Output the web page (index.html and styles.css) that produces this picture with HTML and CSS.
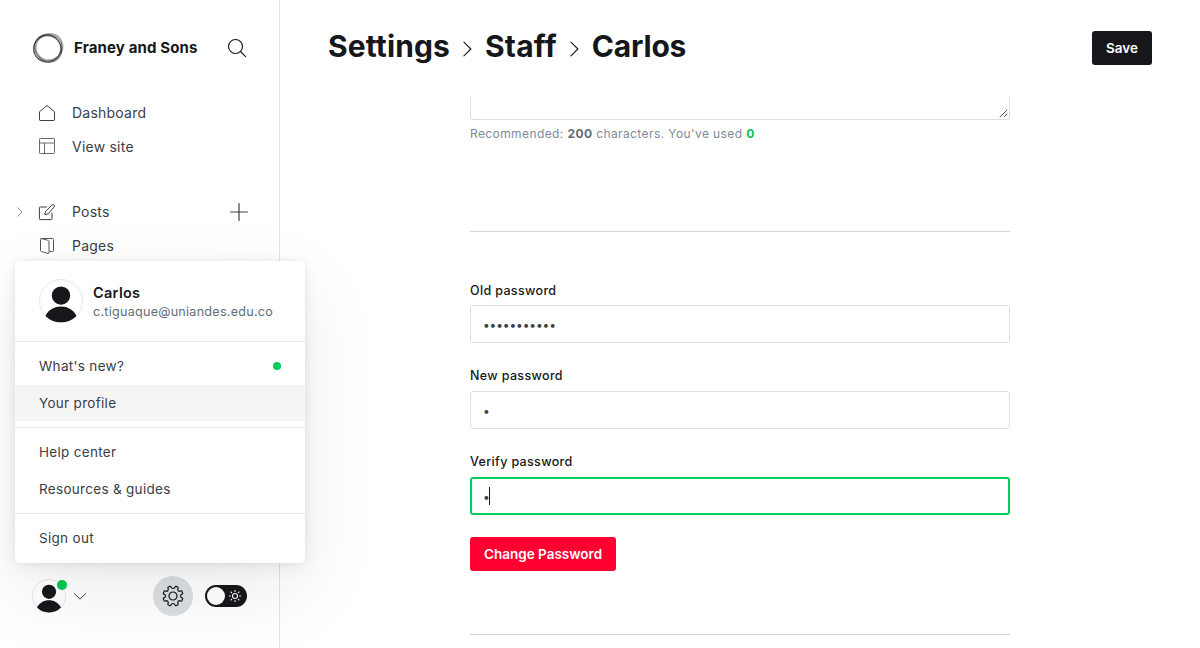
FILE: index.html
```html
<!DOCTYPE html>
<html lang="en">
<head>
<meta charset="utf-8">
<title>Settings - Staff - Carlos</title>
<link rel="stylesheet" href="styles.css">
</head>
<body>
<div class="app">
  <nav class="sidebar">
    <header class="brand">
      <svg class="brand-logo" viewBox="0 0 32 32" fill="none" stroke="#15171a">
        <ellipse cx="15.300" cy="16.800" rx="13.500" ry="13.300" stroke-width="1.300" opacity=".65"/>
        <ellipse cx="17.200" cy="15.200" rx="13.600" ry="13" stroke-width="1.900" opacity=".35" transform="rotate(-35 17 15.300)"/>
        <ellipse cx="16.200" cy="16.200" rx="14.600" ry="12.700" stroke-width="1" opacity=".5" transform="rotate(50 16.200 16.200)"/>
        <ellipse cx="15.700" cy="16" rx="14.600" ry="13" stroke-width=".8" opacity=".45" transform="rotate(-20 15.700 16)"/>
      </svg>
      <span class="brand-name">Franey and Sons</span>
      <svg class="search" viewBox="0 0 18 18" fill="none" stroke="#15171a" stroke-width="1.15" stroke-linecap="round"><circle cx="7.5" cy="7.5" r="7"/><path d="M12.5 12.5 17.6 17.6"/></svg>
    </header>
    <ul class="nav">
      <li class="nav-item">
        <svg class="nav-icon" viewBox="0 0 16 16" fill="none" stroke="#394047" stroke-linejoin="round"><path d="M.5 6.7 8 .6l7.500 6.100v8.100a.7.7 0 0 1-.7.7H1.200a.7.7 0 0 1-.7-.7z"/></svg>
        <span>Dashboard</span>
      </li>
      <li class="nav-item">
        <svg class="nav-icon nav-icon-site" viewBox="0 0 16 16" fill="none" stroke="#626d79"><rect x=".5" y=".5" width="15" height="15" rx=".8"/><path d="M.5 5h15M5.500 5v10.500"/></svg>
        <span>View site</span>
      </li>
    </ul>
    <ul class="nav nav-content">
      <li class="nav-item">
        <svg class="nav-expand" viewBox="0 0 6 10" fill="none" stroke="#7c8b9a" stroke-linecap="round" stroke-linejoin="round"><path d="M.9.8 5.100 5 .9 9.200"/></svg>
        <svg class="nav-icon" viewBox="0 0 16 16" fill="none" stroke="#394047" stroke-linecap="round" stroke-linejoin="round"><path d="M7.500 3H1.200a.8.8 0 0 0-.8.8v11a.8.8 0 0 0 .8.8h11a.8.8 0 0 0 .8-.8V9M8.800 9.900l-3 .7.700-3L13.100 1a1.350 1.350 0 0 1 2 0 1.350 1.350 0 0 1 0 2z"/></svg>
        <span>Posts</span>
        <svg class="nav-plus" viewBox="0 0 18 18" fill="none" stroke="#394047" stroke-width="1.2" stroke-linecap="round"><path d="M9 .6v16.800M.6 9h16.800"/></svg>
      </li>
      <li class="nav-item">
        <svg class="nav-icon" viewBox="0 0 16 16" fill="none" stroke="#4d555d" stroke-linejoin="round"><path d="M2.200.5h11.500a.8.800 0 0 1 .8.800v11.500a.8.800 0 0 1-.8.800h-3.200M2.200.5l6.300 1.700q1.500.4 1.500 1.500v11q0 1-1 .7L2.300 13.500q-.8-.2-.8-1V1.200q0-.7.7-.7z"/></svg>
        <span>Pages</span>
      </li>
    </ul>
    <footer class="account">
      <span class="avatar avatar-small">
        <svg viewBox="0 0 44 44"><circle cx="22" cy="16.600" r="9.200" fill="#15171a"/><path d="M6.500 36.900C9.500 31 15 27.600 22 27.600s12.500 3.400 15.500 9.300A21.700 21.700 0 0 1 22 43.200 21.700 21.700 0 0 1 6.500 36.900z" fill="#15171a"/></svg>
        <i class="badge"></i>
      </span>
      <svg class="account-arrow" viewBox="0 0 12 7" fill="none" stroke="#394047" stroke-linecap="round" stroke-linejoin="round"><path d="M.6.7 6 6.200 11.400.7"/></svg>
      <span class="gear">
        <svg viewBox="-10 -10 20 20" fill="none" stroke="#15171a" stroke-width="1.200" stroke-linecap="round" stroke-linejoin="round">
          <circle r="4"/>
          <path id="tooth" d="M0-7.500C1.200-7.500 1.700-8.200 1.900-8.900Q2.200-9.900 3.100-9.600L4.600-8.980Q5.450-8.550 4.950-7.640C4.600-7 4.460-6.160 5.300-5.300"/>
          <use href="#tooth" transform="rotate(45)"/><use href="#tooth" transform="rotate(90)"/><use href="#tooth" transform="rotate(135)"/><use href="#tooth" transform="rotate(180)"/><use href="#tooth" transform="rotate(225)"/><use href="#tooth" transform="rotate(270)"/><use href="#tooth" transform="rotate(315)"/>
        </svg>
      </span>
      <span class="toggle">
        <i class="toggle-knob"></i>
        <svg viewBox="0 0 14 14" fill="none" stroke="#fff" stroke-width="1.1" stroke-linecap="round"><circle cx="7" cy="7" r="2.500"/><path d="M7 1.400v1M7 11.600v1M1.400 7h1M11.600 7h1M3 3l.7.7M10.300 10.300l.7.7M3 11l.7-.7M10.300 3.700l.7-.7"/></svg>
      </span>
    </footer>
    <div class="menu">
      <div class="menu-user">
        <span class="avatar">
          <svg viewBox="0 0 44 44"><circle cx="22" cy="16.600" r="9.200" fill="#15171a"/><path d="M6.500 36.900C9.500 31 15 27.600 22 27.600s12.500 3.400 15.500 9.300A21.700 21.700 0 0 1 22 43.200 21.700 21.700 0 0 1 6.500 36.900z" fill="#15171a"/></svg>
        </span>
        <div class="menu-identity">
          <div class="menu-name">Carlos</div>
          <div class="menu-email">c.tiguaque@uniandes.edu.co</div>
        </div>
      </div>
      <ul class="menu-group">
        <li class="menu-item"><span>What's new?</span><i class="new-dot"></i></li>
        <li class="menu-item active"><span>Your profile</span></li>
      </ul>
      <ul class="menu-group">
        <li class="menu-item"><span>Help center</span></li>
        <li class="menu-item"><span>Resources &amp; guides</span></li>
      </ul>
      <ul class="menu-group">
        <li class="menu-item"><span>Sign out</span></li>
      </ul>
    </div>
  </nav>
  <main class="main">
    <header class="top">
      <h1 class="crumbs">
        <span class="crumb-settings">Settings</span>
        <svg viewBox="0 0 9 16" fill="none" stroke="#15171a" stroke-width="1.100" stroke-linecap="round" stroke-linejoin="round"><path d="M.9 1.200 7.900 8 .9 14.800"/></svg>
        <span class="crumb-staff">Staff</span>
        <svg viewBox="0 0 9 16" fill="none" stroke="#15171a" stroke-width="1.100" stroke-linecap="round" stroke-linejoin="round"><path d="M.9 1.200 7.900 8 .9 14.800"/></svg>
        <span class="crumb-name">Carlos</span>
      </h1>
      <button class="btn save"><span>Save</span></button>
    </header>
    <section class="form">
      <div class="bio"><svg viewBox="0 0 9 9" stroke="#394047" stroke-width=".9"><path d="M.8 8.200 8.200.8M4.800 8.200 8.200 4.800"/></svg></div>
      <p class="hint"><span>Recommended: <b>200</b> characters. You've used <b class="count">0</b></span></p>
      <hr class="rule">
      <label class="label label-old"><span>Old password</span></label>
      <div class="input"><span class="dots">•••••••••••</span></div>
      <label class="label"><span>New password</span></label>
      <div class="input"><span class="dots">•</span></div>
      <label class="label"><span>Verify password</span></label>
      <div class="input focused"><span class="dots">•</span><i class="caret"></i></div>
      <button class="btn change"><span>Change Password</span></button>
      <hr class="rule rule-end">
    </section>
  </main>
</div>
</body>
</html>
```
FILE: styles.css
```css
* { box-sizing: border-box; }
body { margin: 0; font-family: Inter, sans-serif; color: #15171a; background: #fff; }
ul { list-style: none; margin: 0; padding: 0; }
svg { display: block; flex: none; overflow: visible; }
.app { display: flex; height: 648px; overflow: hidden; }

.sidebar { position: relative; z-index: 2; width: 280px; flex: none; display: flex; flex-direction: column; border-right: 1px solid #e1e4e7; }
.brand { display: flex; align-items: center; height: 96px; padding: 0 33px 0 32px; }
.brand-logo { width: 32px; height: 32px; }
.brand-name { margin-left: 10px; font-size: 15px; font-weight: 700; line-height: 20px; letter-spacing: .14px; white-space: nowrap; }
.search { width: 18px; height: 18px; margin-left: auto; }
.nav-item { display: flex; align-items: center; height: 34px; padding-left: 39px; font-size: 14px; letter-spacing: .23px; color: #394047; }
.nav-item span { padding-bottom: 2px; }
.nav-icon { width: 16px; height: 16px; margin-right: 17px; }
.nav-icon-site { margin-top: -2px; }
.nav-content { margin-top: 31px; }
.nav-expand { width: 6px; height: 10px; margin: 0 16px 0 -22px; }
.nav-plus { width: 18px; height: 18px; margin-left: auto; margin-right: 31px; }

.account { display: flex; align-items: center; height: 40px; margin: auto 32px 32px 32px; }
.avatar { position: relative; width: 44px; height: 44px; border: 1px solid #e5e8eb; border-radius: 50%; background: #fff; flex: none; }
.avatar svg { width: 44px; height: 44px; margin: -1px; }
.avatar-small { width: 34px; height: 34px; }
.avatar-small svg { width: 34px; height: 34px; }
.badge { position: absolute; top: 0; right: -2px; width: 10px; height: 10px; border-radius: 50%; background: #00c853; }
.account-arrow { width: 12px; height: 7px; margin-left: 8px; }
.gear { display: flex; align-items: center; justify-content: center; width: 40px; height: 40px; margin-left: auto; border-radius: 50%; background: #dbdfe2; }
.gear svg { width: 20px; height: 20px; }
.toggle { display: flex; align-items: center; justify-content: space-between; width: 42px; height: 22px; margin-left: 12px; padding: 0 5px 0 2px; border-radius: 11px; background: #15171a; }
.toggle-knob { width: 18px; height: 18px; border-radius: 50%; background: #fff; }
.toggle svg { width: 14px; height: 14px; }

.menu { position: absolute; left: 15px; top: 261px; width: 290px; height: 302px; border-radius: 4px; background: #fff; box-shadow: 0 0 7px rgba(0,0,0,.07), 0 5px 18px rgba(0,0,0,.05), 0 28px 80px rgba(0,0,0,.08); }
.menu-user { display: flex; align-items: center; height: 80px; padding: 0 24px; }
.menu-identity { margin-left: 10px; padding-top: 1px; }
.menu-name { font-size: 14.5px; line-height: 20px; font-weight: 600; letter-spacing: .3px; }
.menu-email { font-size: 12.6px; line-height: 17px; color: #626d79; letter-spacing: .25px; }
.menu-group { height: 86px; padding-top: 6px; border-top: 1px solid #e9ebed; }
.menu-item { display: flex; align-items: center; justify-content: space-between; height: 36px; margin-bottom: 1px; padding: 0 24px; font-size: 13.5px; letter-spacing: .3px; color: #394047; }
.menu-item span { padding-bottom: 1px; }
.active { background: #f4f6f6; }
.new-dot { width: 8px; height: 8px; border-radius: 50%; background: #00cf5b; }

.main { flex: 1; display: flex; flex-direction: column; padding: 0 48px; }
.top { display: flex; align-items: center; justify-content: space-between; height: 96px; flex: none; }
.crumbs { display: flex; align-items: center; margin: 0; font-size: 30px; line-height: 38px; font-weight: 700; padding-bottom: 4px; }
.crumbs svg { width: 9px; height: 16px; margin: 5px 13px 0 13px; }
.crumb-settings { letter-spacing: .12px; }
.crumb-staff { letter-spacing: .2px; }
.crumb-name { letter-spacing: -.2px; }
.btn { height: 34px; padding: 0 14px 1px; border: 0; border-radius: 3px; color: #fff; font: 600 13.5px Inter, sans-serif; white-space: nowrap; }
.save { width: 60px; background: #15171a; }
.form { width: 540px; margin-left: 142px; display: flex; flex-direction: column; }
.bio { display: flex; align-items: flex-end; justify-content: flex-end; height: 24px; padding: 1px; border: 1px solid #dcdfe1; border-top: 0; border-radius: 0 0 3px 3px; }
.bio svg { width: 9px; height: 9px; }
.hint { margin: 4px 0 0; font-size: 12px; line-height: 20px; letter-spacing: .4px; color: #7c8b9a; }
.hint b { font-weight: 700; color: #626d79; }
.hint .count { color: #00c853; }
.rule { width: 100%; height: 1px; margin: 87px 0 0; border: 0; background: #ced4d9; }
.label { margin-top: 23px; margin-bottom: 5px; font-size: 12.5px; line-height: 20px; font-weight: 500; letter-spacing: .35px; }
.label-old { margin-top: 49px; margin-bottom: 4px; }
.input { display: flex; align-items: center; height: 38px; padding: 2px 12px 0; border: 1px solid #dcdfe1; border-radius: 3px; color: #394047; }
.dots { font-size: 12px; line-height: 20px; letter-spacing: -.13px; }
.focused { border: 2px solid #00cf5b; padding: 0 11px; }
.focused .dots { padding-top: 2px; }
.caret { width: 1px; height: 18px; margin-left: -1px; background: #15171a; }
.change { align-self: flex-start; width: 146px; margin-top: 22px; background: #ff0030; }
.rule-end { margin-top: 63px; }
```
